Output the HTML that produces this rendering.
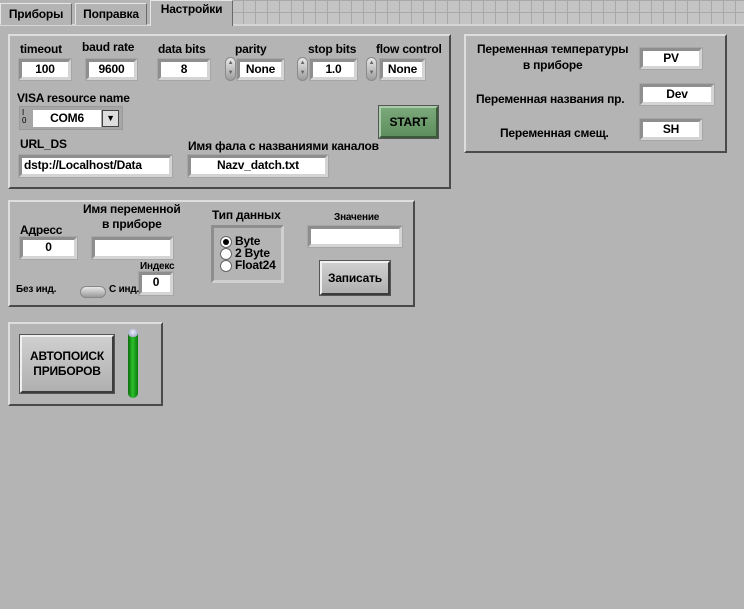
<!DOCTYPE html>
<html><head><meta charset="utf-8"><style>
*{box-sizing:border-box;margin:0;padding:0}
body{width:744px;height:609px;background:#b4b4b4;font-family:"Liberation Sans","Noto Sans CJK SC",sans-serif;font-weight:bold;font-size:12px;color:#000;position:relative;overflow:hidden;letter-spacing:-0.2px}
.a{position:absolute}
.panel{position:absolute;border:2px solid;border-color:#dedede #4a4a4a #4a4a4a #dedede;background:#b4b4b4}
.f{position:absolute;background:#fff;border:3px solid;border-color:#8e8e8e #d4d4d4 #d4d4d4 #8e8e8e;text-align:center;font-size:12px;line-height:15px;outline:1px solid #a6a6a6}
.l{position:absolute;white-space:nowrap;font-size:12px}
.spin{position:absolute;width:11px;height:24px;border-radius:6px;background:linear-gradient(#e8e8e8,#9c9c9c);border:1px solid #8a8a8a;font-size:6px;color:#666;text-align:center;line-height:10px}
.btn{position:absolute;border:2px solid;border-color:#f0f0f0 #3c3c3c #3c3c3c #f0f0f0;background:linear-gradient(#cfcfcf,#b0b0b0);text-align:center;outline:1px solid #555}
.tab{position:absolute;top:2px;height:22px;background:#b4b4b4;border:1px solid;border-color:#e6e6e6 #6a6a6a #b4b4b4 #e6e6e6;font-size:12px;text-align:center;line-height:20px}
</style></head><body>
<div class="a" style="left:233px;top:0;width:511px;height:25px;background-color:#c4c4c4;background-image:linear-gradient(90deg,#a8a8a8 1px,transparent 1px),linear-gradient(#a8a8a8 1px,transparent 1px);background-size:12px 12px;background-position:-2px 0"></div>
<div class="a" style="left:0;top:24px;width:744px;height:2px;background:#d6d6d6"></div>
<div class="tab" style="left:0;width:72px;top:3px">Приборы</div>
<div class="tab" style="left:75px;width:72px;top:3px">Поправка</div>
<div class="tab" style="left:150px;width:83px;top:0;height:26px;border-bottom:none;line-height:16px">Настройки</div>

<div class="panel" style="left:8px;top:34px;width:443px;height:155px"></div>
<div class="l" style="left:20px;top:42px">timeout</div>
<div class="l" style="left:82px;top:40px">baud rate</div>
<div class="l" style="left:158px;top:42px">data bits</div>
<div class="l" style="left:235px;top:42px">parity</div>
<div class="l" style="left:308px;top:42px">stop bits</div>
<div class="l" style="left:376px;top:42px">flow control</div>
<div class="f" style="left:19px;top:59px;width:52px;height:21px">100</div>
<div class="f" style="left:86px;top:59px;width:51px;height:21px">9600</div>
<div class="f" style="left:158px;top:59px;width:52px;height:21px">8</div>
<div class="spin" style="left:225px;top:57px">▲<br>▼</div>
<div class="f" style="left:237px;top:59px;width:47px;height:21px">None</div>
<div class="spin" style="left:297px;top:57px">▲<br>▼</div>
<div class="f" style="left:310px;top:59px;width:47px;height:21px">1.0</div>
<div class="spin" style="left:366px;top:57px">▲<br>▼</div>
<div class="f" style="left:380px;top:59px;width:45px;height:21px">None</div>
<div class="l" style="left:17px;top:91px">VISA resource name</div>
<div class="a" style="left:19px;top:106px;width:104px;height:24px;background:#a6a6a6;border:1px solid #9a9a9a"></div>
<div class="a" style="left:22px;top:109px;font-size:8px;font-weight:normal;line-height:8px">I<br>0</div>
<div class="a" style="left:33px;top:110px;width:68px;height:17px;background:#fff;line-height:17px;text-align:center">COM6</div>
<div class="a" style="left:102px;top:110px;width:17px;height:17px;background:#ddd;border:1px solid #444;font-size:9px;text-align:center;line-height:15px">▼</div>
<div class="btn" style="left:379px;top:106px;width:59px;height:32px;background:linear-gradient(#7aa87a,#5f8f5f);border-color:#a8cca8 #3a5a3a #3a5a3a #a8cca8;line-height:28px">START</div>
<div class="l" style="left:20px;top:137px">URL_DS</div>
<div class="l" style="left:188px;top:139px">Имя фала с названиями каналов</div>
<div class="f" style="left:19px;top:155px;width:153px;height:22px;text-align:left;padding-left:2px">dstp://Localhost/Data</div>
<div class="f" style="left:188px;top:155px;width:140px;height:22px">Nazv_datch.txt</div>

<div class="panel" style="left:464px;top:34px;width:263px;height:119px"></div>
<div class="l" style="left:477px;top:41px;text-align:center;line-height:16px">Переменная температуры<br>в приборе</div>
<div class="f" style="left:640px;top:48px;width:62px;height:21px">PV</div>
<div class="l" style="left:476px;top:92px">Переменная названия пр.</div>
<div class="f" style="left:640px;top:84px;width:74px;height:21px">Dev</div>
<div class="l" style="left:500px;top:126px">Переменная смещ.</div>
<div class="f" style="left:640px;top:119px;width:62px;height:21px">SH</div>

<div class="panel" style="left:8px;top:200px;width:407px;height:107px"></div>
<div class="l" style="left:20px;top:223px">Адресс</div>
<div class="l" style="left:83px;top:202px;text-align:center;line-height:15px">Имя переменной<br>в приборе</div>
<div class="f" style="left:20px;top:237px;width:57px;height:22px">0</div>
<div class="f" style="left:92px;top:237px;width:81px;height:22px"></div>
<div class="l" style="left:140px;top:261px;font-size:10px">Индекс</div>
<div class="f" style="left:139px;top:272px;width:34px;height:23px">0</div>
<div class="l" style="left:16px;top:284px;font-size:10px">Без инд.</div>
<div class="l" style="left:109px;top:284px;font-size:10px">С инд.</div>
<div class="a" style="left:80px;top:286px;width:26px;height:12px;border-radius:6px;background:linear-gradient(#e8e8e8,#9a9a9a);border:1px solid #888"></div>
<div class="l" style="left:212px;top:208px">Тип данных</div>
<div class="a" style="left:211px;top:225px;width:73px;height:58px;border:3px solid;border-color:#8e8e8e #d0d0d0 #d0d0d0 #8e8e8e;background:#b4b4b4"></div>
<div class="a" style="left:220px;top:236px;width:12px;height:12px;border-radius:50%;background:#fff;border:1px solid #666"><div style="margin:2px;width:6px;height:6px;border-radius:50%;background:#000"></div></div>
<div class="a" style="left:220px;top:248px;width:12px;height:12px;border-radius:50%;background:#fff;border:1px solid #666"></div>
<div class="a" style="left:220px;top:260px;width:12px;height:12px;border-radius:50%;background:#fff;border:1px solid #666"></div>
<div class="l" style="left:235px;top:235px;line-height:12px">Byte<br>2 Byte<br>Float24</div>
<div class="l" style="left:334px;top:212px;font-size:10px">Значение</div>
<div class="f" style="left:308px;top:226px;width:94px;height:21px"></div>
<div class="btn" style="left:320px;top:261px;width:70px;height:34px;line-height:30px">Записать</div>

<div class="panel" style="left:8px;top:322px;width:155px;height:84px"></div>
<div class="btn" style="left:20px;top:335px;width:94px;height:58px;line-height:15px;padding-top:12px">АВТОПОИСК<br>ПРИБОРОВ</div>
<div class="a" style="left:128px;top:330px;width:10px;height:68px;border-radius:5px;background:linear-gradient(90deg,#0a6a0a,#2cc02c 45%,#0a7a0a);"></div>
<div class="a" style="left:128px;top:329px;width:10px;height:8px;border-radius:5px;background:radial-gradient(circle at 50% 40%,#eef,#8890b0)"></div>
</body></html>
